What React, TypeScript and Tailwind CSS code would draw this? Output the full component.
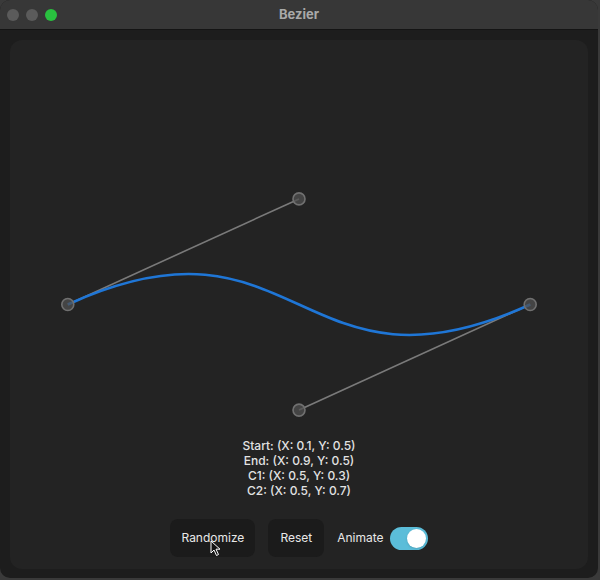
import React from "react"

const W = 578
const H = 528

const pts = {
    start: { x: 0.1, y: 0.5 },
    end: { x: 0.9, y: 0.5 },
    c1: { x: 0.5, y: 0.3 },
    c2: { x: 0.5, y: 0.7 },
}

function BezierCanvas() {
    const s = { x: pts.start.x * W, y: pts.start.y * H }
    const e = { x: pts.end.x * W, y: pts.end.y * H }
    const a = { x: pts.c1.x * W, y: pts.c1.y * H }
    const b = { x: pts.c2.x * W, y: pts.c2.y * H }
    const handle = (p: { x: number; y: number }) => (
        <circle cx={p.x} cy={p.y} r={6} fill="#505050" fillOpacity={0.75} stroke="#707070" strokeWidth={1.6} />
    )
    return (
        <svg className="absolute inset-0 w-full h-full" viewBox={`0 0 ${W} ${H}`}>
            <line x1={s.x} y1={s.y} x2={a.x} y2={a.y} stroke="#7a7a7a" strokeWidth={1.6} />
            <line x1={e.x} y1={e.y} x2={b.x} y2={b.y} stroke="#7a7a7a" strokeWidth={1.6} />
            <path
                d={`M ${s.x} ${s.y} C ${a.x} ${a.y}, ${b.x} ${b.y}, ${e.x} ${e.y}`}
                fill="none"
                stroke="#1f76d6"
                strokeWidth={2.6}
            />
            {handle(s)}
            {handle(e)}
            {handle(a)}
            {handle(b)}
        </svg>
    )
}

export default function App() {
    return (
        <div className="w-[600px] h-[580px] bg-[#3a3a3a] font-['Inter',sans-serif]">
            <div className="w-[598px] h-[578px] rounded-[10px] overflow-hidden bg-[#1d1d1d] flex flex-col">
                <div className="h-[30px] bg-[#373737] border-b border-[#141414] relative flex items-center justify-center shrink-0">
                    <div className="absolute left-[7px] top-[9px] flex gap-[7px]">
                        <span className="w-[12px] h-[12px] rounded-full bg-[#5b5b5b]" />
                        <span className="w-[12px] h-[12px] rounded-full bg-[#5b5b5b]" />
                        <span className="w-[12px] h-[12px] rounded-full bg-[#29c13f]" />
                    </div>
                    <span className="text-[13px] font-bold text-[#a9a9a9]">Bezier</span>
                </div>
                <div className="flex-1 px-[10px] pt-[10px] pb-[9px]">
                    <div className="relative h-full rounded-[12px] bg-[#232323] flex flex-col items-center justify-end pb-[12px]">
                        <BezierCanvas />
                        <div className="relative flex flex-col items-center text-[12px] leading-[15px] font-medium text-[#e2e2e2]">
                            <span>Start: (X: 0.1, Y: 0.5)</span>
                            <span>End: (X: 0.9, Y: 0.5)</span>
                            <span>C1: (X: 0.5, Y: 0.3)</span>
                            <span>C2: (X: 0.5, Y: 0.7)</span>
                        </div>
                        <div className="relative mt-[21px] flex items-center gap-[13px] text-[12px] text-[#e8e8e8]">
                            <button className="h-[38px] px-[11px] rounded-[8px] bg-[#1b1b1b] relative">
                                Randomize
                                <svg className="absolute left-[40px] top-[21px]" width="12" height="17" viewBox="0 0 12 17">
                                    <path d="M1 1 L1 13 L4 10 L6.5 15.5 L8.5 14.5 L6 9.2 L10 9.2 Z" fill="#111" stroke="#fff" strokeWidth="1" />
                                </svg>
                            </button>
                            <button className="h-[38px] px-[12px] rounded-[8px] bg-[#1b1b1b]">Reset</button>
                            <div className="flex items-center gap-[6px]">
                                <span>Animate</span>
                                <div className="w-[38px] h-[23px] rounded-full bg-[#5bbdd9] flex items-center justify-end pr-[2px]">
                                    <span className="w-[19px] h-[19px] rounded-full bg-white shadow" />
                                </div>
                            </div>
                        </div>
                    </div>
                </div>
            </div>
        </div>
    )
}
